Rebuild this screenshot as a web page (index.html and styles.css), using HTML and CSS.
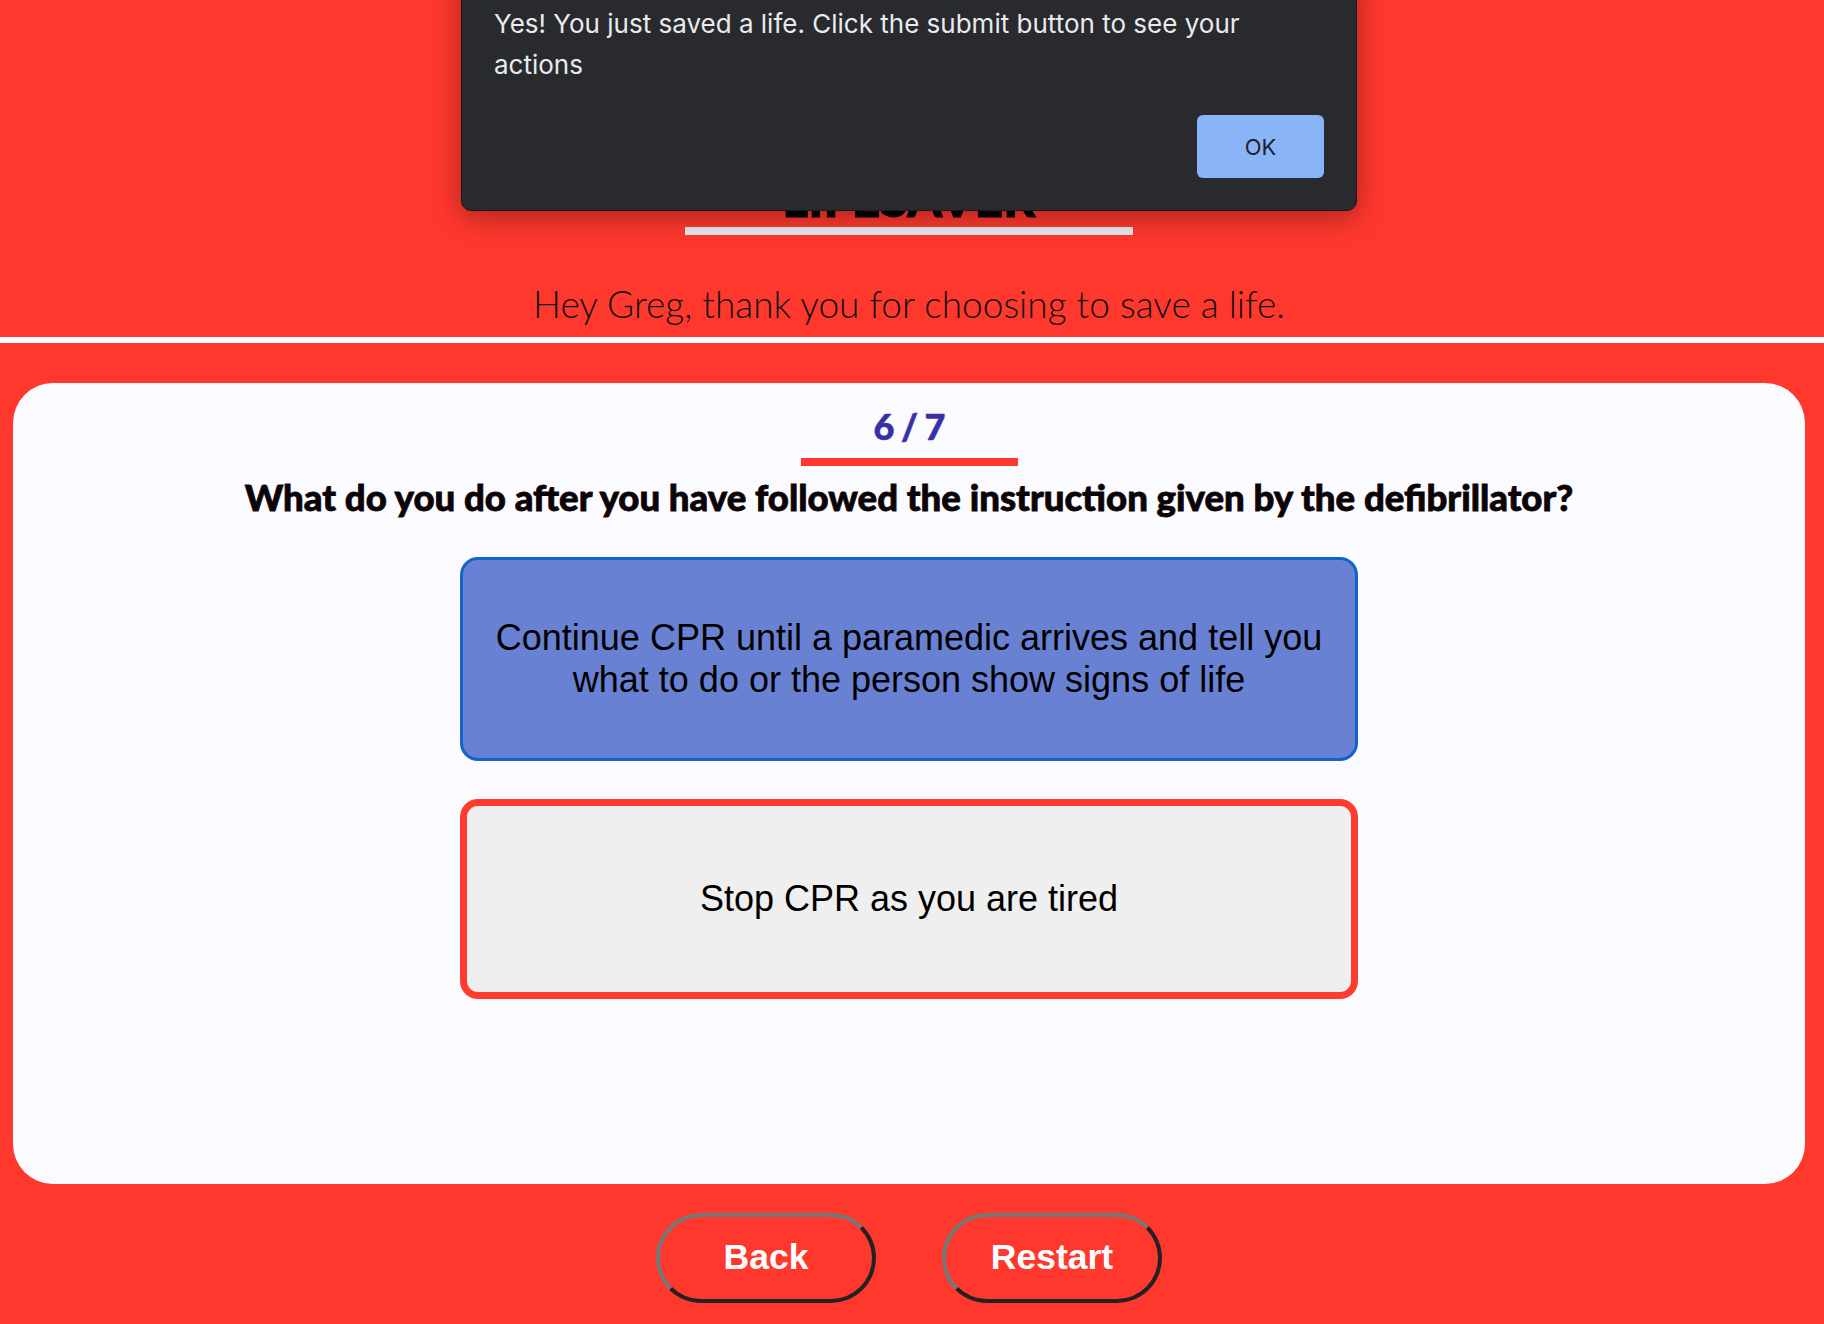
FILE: index.html
```html
<!DOCTYPE html>
<html lang="en">
<head>
<meta charset="utf-8">
<title>Lifesaver</title>
<link rel="stylesheet" href="styles.css">
</head>
<body>
<header class="header">
  <h1 class="title">LIFESAVER</h1>
  <div class="title-bar"></div>
  <p class="greeting">Hey Greg, thank you for choosing to save a life.</p>
</header>
<main class="card">
  <div class="progress">6 / 7</div>
  <div class="progress-bar"></div>
  <h2 class="question">What do you do after you have followed the instruction given by the defibrillator?</h2>
  <div class="options">
    <button class="option option-selected">Continue CPR until a paramedic arrives and tell you what to do or the person show signs of life</button>
    <button class="option option-wrong">Stop CPR as you are tired</button>
  </div>
</main>
<nav class="nav">
  <button class="nav-btn">Back</button>
  <button class="nav-btn">Restart</button>
</nav>
<div class="dialog">
  <p class="dialog-text">Yes! You just saved a life. Click the submit button to see your actions</p>
  <div class="dialog-actions">
    <button class="dialog-ok">OK</button>
  </div>
</div>
</body>
</html>
```

FILE: styles.css
```css
html, body {
  margin: 0;
  padding: 0;
}
body {
  background: #ff382e;
  font-family: "Lato", "Liberation Sans", sans-serif;
  position: relative;
  min-height: 1324px;
}
.header {
  display: flex;
  flex-direction: column;
  align-items: center;
  padding: 173px 6px 0 0;
  border-bottom: 6px solid #fbfbff;
}
.title {
  margin: 0;
  font-size: 50px;
  line-height: 50px;
  font-weight: 900;
  color: #000;
  -webkit-text-stroke: 0.8px #000;
}
.title-bar {
  margin-top: 4px;
  width: 448px;
  height: 8px;
  background: #e9e8ee;
}
.greeting {
  margin: 46.5px 0 11px;
  font-size: 37px;
  font-weight: 300;
  line-height: 1.2;
  color: #111;
}
.card {
  margin: 40px 19px 0 13px;
  background: #fbfbff;
  border-radius: 40px;
  padding: 22px 0 185px;
  display: flex;
  flex-direction: column;
  align-items: center;
}
.progress {
  font-size: 36px;
  font-weight: 900;
  line-height: 1.2;
  letter-spacing: -1px;
  color: #3730a6;
  -webkit-text-stroke: 0.6px #3730a6;
}
.progress-bar {
  margin-top: 10px;
  width: 217px;
  height: 8px;
  background: #ff382e;
}
.question {
  margin: 10px 0 37px;
  font-size: 36.6px;
  font-weight: 900;
  line-height: 1.2;
  color: #0c0508;
  -webkit-text-stroke: 0.8px #0c0508;
}
.options {
  display: flex;
  flex-direction: column;
  align-items: center;
  gap: 38px;
}
.option {
  box-sizing: border-box;
  width: 898px;
  display: flex;
  align-items: center;
  justify-content: center;
  padding: 0 26px;
  font-family: "Liberation Sans", Arial, sans-serif;
  font-size: 36px;
  line-height: 42px;
  color: #000;
  text-align: center;
  border-radius: 18px;
}
.option-selected {
  height: 204px;
  background: #6981d3;
  border: 3px solid #1662cb;
}
.option-wrong {
  height: 200px;
  background: #efefef;
  border: 7px solid #ff3a2f;
}
.nav {
  display: flex;
  justify-content: center;
  gap: 66px;
  margin-top: 29px;
  padding-right: 6px;
}
.nav-btn {
  box-sizing: border-box;
  width: 220px;
  height: 90px;
  border-radius: 45px;
  border: 4px solid;
  border-color: #777777 #222222 #222222 #777777;
  background: #ff382e;
  color: #ffffff;
  font-family: "Liberation Sans", Arial, sans-serif;
  font-weight: 700;
  font-size: 35.5px;
}
.dialog {
  position: absolute;
  top: -30px;
  left: 461px;
  width: 896px;
  height: 241px;
  box-sizing: border-box;
  background: #292a2d;
  border: 1px solid #1b1b1d;
  border-radius: 10px;
  box-shadow: 0 6px 28px rgba(0, 0, 0, 0.35);
  padding: 32px 32px 0 32px;
  font-family: "Inter", "Roboto", sans-serif;
}
.dialog-text {
  margin: 0;
  max-width: 790px;
  color: #e8eaed;
  font-size: 26px;
  line-height: 41px;
}
.dialog-actions {
  display: flex;
  justify-content: flex-end;
  margin-top: 30px;
}
.dialog-ok {
  width: 127px;
  height: 63px;
  border: none;
  border-radius: 6px;
  background: #8ab4f8;
  color: #202124;
  font-family: "Inter", "Roboto", sans-serif;
  font-size: 22px;
}
```
